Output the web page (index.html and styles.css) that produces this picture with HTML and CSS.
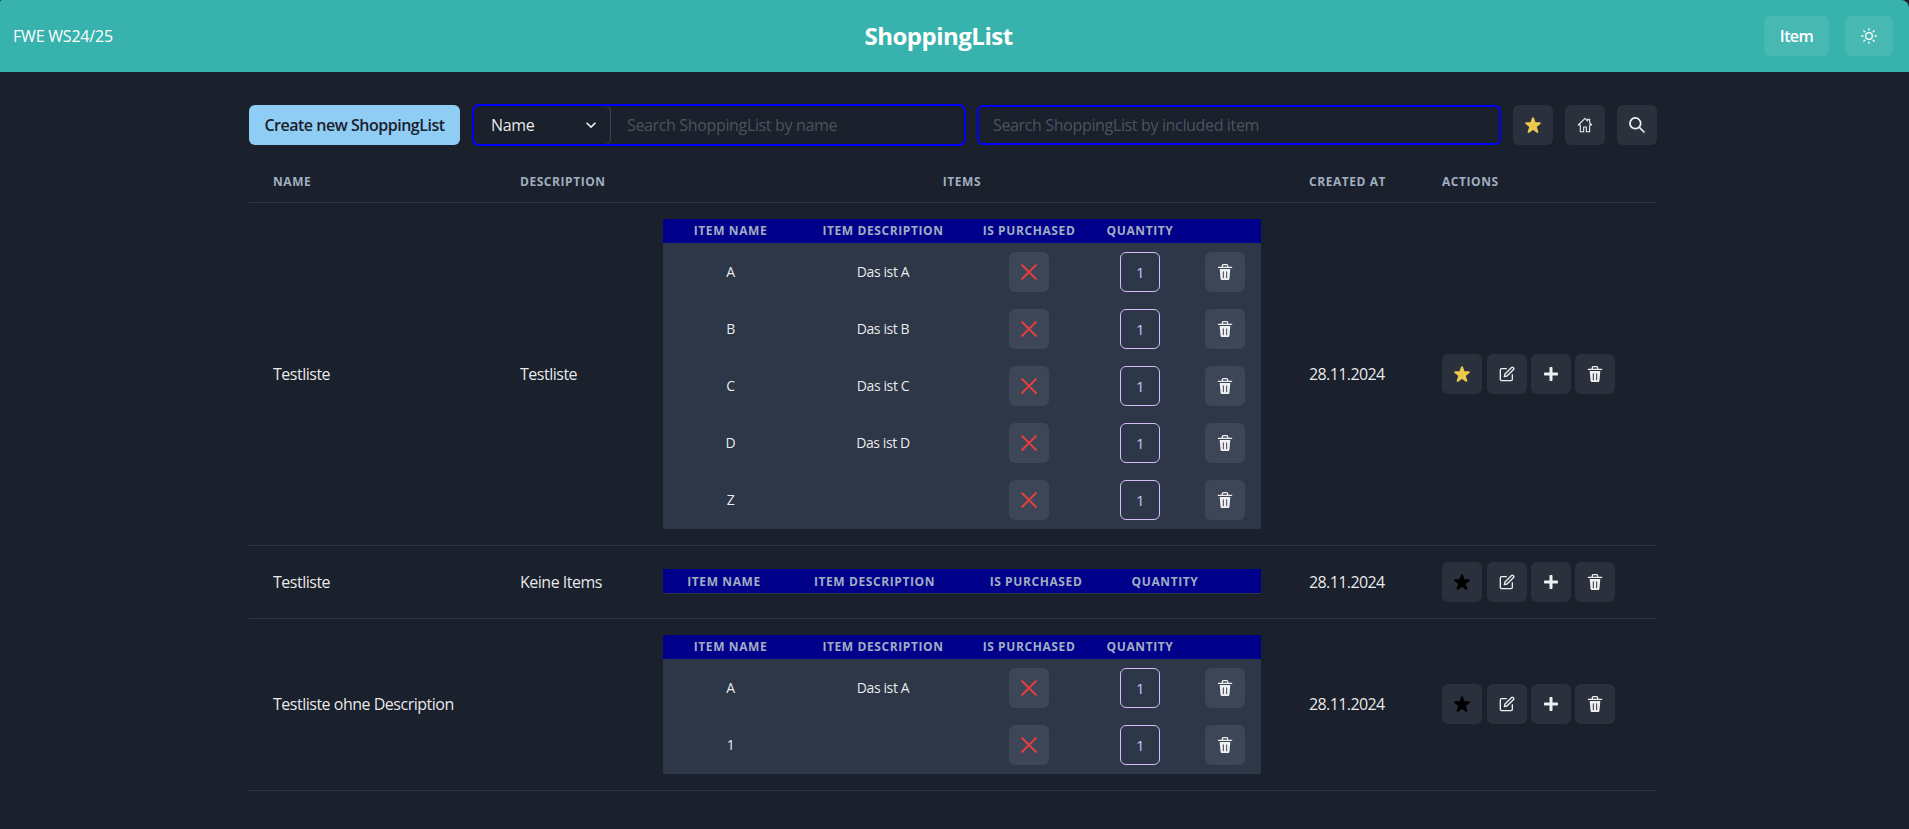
FILE: index.html
```html
<!DOCTYPE html>
<html lang="en">
<head>
<meta charset="utf-8">
<title>ShoppingList</title>
<link rel="stylesheet" href="styles.css">
</head>
<body>
<svg class="defs" width="0" height="0" aria-hidden="true">
  <defs>
    <symbol id="i-star" viewBox="0 0 24 24"><path fill="currentColor" d="M23.555,8.729a1.505,1.505,0,0,0-1.406-.98H16.062a.5.5,0,0,1-.472-.334L13.405,1.222a1.5,1.5,0,0,0-2.81,0l-.005.016L8.41,7.415a.5.5,0,0,1-.471.334H1.85A1.5,1.5,0,0,0,.887,10.4l5.184,4.3a.5.5,0,0,1,.155.543L4.048,21.774a1.5,1.5,0,0,0,2.31,1.684l5.346-3.92a.5.5,0,0,1,.591,0l5.344,3.919a1.5,1.5,0,0,0,2.312-1.683l-2.178-6.535a.5.5,0,0,1,.155-.543l5.194-4.306A1.5,1.5,0,0,0,23.555,8.729Z"/></symbol>
    <symbol id="i-edit" viewBox="0 0 24 24"><g fill="none" stroke="currentColor" stroke-width="2" stroke-linecap="round" stroke-linejoin="round"><path d="M11 4H4a2 2 0 0 0-2 2v14a2 2 0 0 0 2 2h14a2 2 0 0 0 2-2v-7"/><path d="M18.5 2.5a2.121 2.121 0 0 1 3 3L12 15l-4 1 1-4 9.5-9.5z"/></g></symbol>
    <symbol id="i-add" viewBox="0 0 448 512"><path fill="currentColor" d="M416 208H272V64c0-17.67-14.33-32-32-32h-32c-17.67 0-32 14.33-32 32v144H32c-17.67 0-32 14.33-32 32v32c0 17.67 14.33 32 32 32h144v144c0 17.67 14.33 32 32 32h32c17.67 0 32-14.33 32-32V304h144c17.67 0 32-14.33 32-32v-32c0-17.67-14.33-32-32-32z"/></symbol>
    <symbol id="i-del" viewBox="0 0 24 24"><path fill="currentColor" d="M19.452 7.5H4.547a.5.5 0 00-.5.545l1.287 14.136A2 2 0 007.326 24h9.347a2 2 0 001.992-1.819L19.95 8.045a.5.5 0 00-.129-.382.5.5 0 00-.369-.163zm-9.2 13a.75.75 0 01-1.5 0v-9a.75.75 0 011.5 0zm5 0a.75.75 0 01-1.5 0v-9a.75.75 0 011.5 0zM22 4h-4.75a.25.25 0 01-.25-.25V2.5A2.5 2.5 0 0014.5 0h-5A2.5 2.5 0 007 2.5v1.25a.25.25 0 01-.25.25H2a1 1 0 000 2h20a1 1 0 000-2zM9 3.75V2.5a.5.5 0 01.5-.5h5a.5.5 0 01.5.5v1.25a.25.25 0 01-.25.25h-5.5A.25.25 0 019 3.75z"/></symbol>
    <symbol id="i-search" viewBox="0 0 24 24"><path fill="currentColor" d="M23.384,21.619,16.855,15.09a9.284,9.284,0,1,0-1.768,1.768l6.529,6.529a1.266,1.266,0,0,0,1.768,0A1.251,1.251,0,0,0,23.384,21.619ZM2.75,9.5a6.75,6.75,0,1,1,6.75,6.75A6.758,6.758,0,0,1,2.75,9.5Z"/></symbol>
    <symbol id="i-sun" viewBox="0 0 24 24"><g fill="none" stroke="currentColor" stroke-width="2" stroke-linecap="round" stroke-linejoin="round"><circle cx="12" cy="12" r="5"/><path d="M12 1v2M12 21v2M4.22 4.22l1.42 1.42M18.36 18.36l1.42 1.42M1 12h2M21 12h2M4.22 19.78l1.42-1.42M18.36 5.64l1.42-1.42"/></g></symbol>
    <symbol id="i-home" viewBox="0 0 24 24"><path fill="none" stroke="currentColor" stroke-width="1.6" stroke-linejoin="round" stroke-linecap="round" d="M2 12 12 2l4 4V3.5h3V9l3 3h-3v10h-5v-7h-4v7H5V12H2z"/></symbol>
    <symbol id="i-x" viewBox="0 0 24 24"><path fill="none" stroke="currentColor" stroke-width="2.5" d="M2 2l20 20M22 2 2 22"/></symbol>
    <symbol id="i-chev" viewBox="0 0 24 24"><path fill="currentColor" d="M16.59 8.59 12 13.17 7.41 8.59 6 10l6 6 6-6z"/></symbol>
  </defs>
</svg>

<header class="topbar">
  <div class="brand">FWE WS24/25</div>
  <h1 class="title">ShoppingList</h1>
  <nav class="topnav">
    <button class="topbtn">Item</button>
    <button class="topbtn topbtn-icon"><svg class="ic16"><use href="#i-sun"/></svg></button>
  </nav>
</header>

<main class="page">
  <div class="toolbar">
    <button class="create">Create new ShoppingList</button>
    <div class="group">
      <div class="select"><span>Name</span><svg class="chev"><use href="#i-chev"/></svg></div>
      <input class="group-input" placeholder="Search ShoppingList by name">
    </div>
    <input class="search-input" placeholder="Search ShoppingList by included item">
    <button class="ibtn star-y"><svg class="ic16"><use href="#i-star"/></svg></button>
    <button class="ibtn"><svg class="ic16"><use href="#i-home"/></svg></button>
    <button class="ibtn"><svg class="ic16"><use href="#i-search"/></svg></button>
  </div>

  <table class="lists">
    <colgroup><col class="c-name"><col class="c-desc"><col class="c-items"><col class="c-date"><col class="c-act"></colgroup>
    <thead>
      <tr><th>Name</th><th>Description</th><th class="center">Items</th><th>Created at</th><th>Actions</th></tr>
    </thead>
    <tbody>
      <tr>
        <td>Testliste</td>
        <td>Testliste</td>
        <td>
          <table class="items">
            <colgroup><col class="i-name"><col class="i-desc"><col class="i-pur"><col class="i-qty"><col class="i-del"></colgroup>
            <thead><tr><th>Item Name</th><th>Item Description</th><th>Is Purchased</th><th>Quantity</th><th></th></tr></thead>
            <tbody>
              <tr><td>A</td><td>Das ist A</td><td><button class="ibtn x"><svg class="ic18"><use href="#i-x"/></svg></button></td><td><div class="qty">1</div></td><td class="del-cell"><button class="ibtn"><svg class="ic16"><use href="#i-del"/></svg></button></td></tr>
              <tr><td>B</td><td>Das ist B</td><td><button class="ibtn x"><svg class="ic18"><use href="#i-x"/></svg></button></td><td><div class="qty">1</div></td><td class="del-cell"><button class="ibtn"><svg class="ic16"><use href="#i-del"/></svg></button></td></tr>
              <tr><td>C</td><td>Das ist C</td><td><button class="ibtn x"><svg class="ic18"><use href="#i-x"/></svg></button></td><td><div class="qty">1</div></td><td class="del-cell"><button class="ibtn"><svg class="ic16"><use href="#i-del"/></svg></button></td></tr>
              <tr><td>D</td><td>Das ist D</td><td><button class="ibtn x"><svg class="ic18"><use href="#i-x"/></svg></button></td><td><div class="qty">1</div></td><td class="del-cell"><button class="ibtn"><svg class="ic16"><use href="#i-del"/></svg></button></td></tr>
              <tr><td>Z</td><td></td><td><button class="ibtn x"><svg class="ic18"><use href="#i-x"/></svg></button></td><td><div class="qty">1</div></td><td class="del-cell"><button class="ibtn"><svg class="ic16"><use href="#i-del"/></svg></button></td></tr>
            </tbody>
          </table>
        </td>
        <td class="date">28.11.2024</td>
        <td><div class="actions">
          <button class="ibtn star-y"><svg class="ic16"><use href="#i-star"/></svg></button>
          <button class="ibtn"><svg class="ic16"><use href="#i-edit"/></svg></button>
          <button class="ibtn"><svg class="ic16"><use href="#i-add"/></svg></button>
          <button class="ibtn"><svg class="ic16"><use href="#i-del"/></svg></button>
        </div></td>
      </tr>
      <tr>
        <td>Testliste</td>
        <td>Keine Items</td>
        <td>
          <table class="items items-empty">
            <colgroup><col class="e-name"><col class="e-desc"><col class="e-pur"><col class="e-qty"><col class="e-del"></colgroup>
            <thead><tr><th>Item Name</th><th>Item Description</th><th>Is Purchased</th><th>Quantity</th><th></th></tr></thead>
          </table>
        </td>
        <td class="date">28.11.2024</td>
        <td><div class="actions">
          <button class="ibtn star-k"><svg class="ic16"><use href="#i-star"/></svg></button>
          <button class="ibtn"><svg class="ic16"><use href="#i-edit"/></svg></button>
          <button class="ibtn"><svg class="ic16"><use href="#i-add"/></svg></button>
          <button class="ibtn"><svg class="ic16"><use href="#i-del"/></svg></button>
        </div></td>
      </tr>
      <tr>
        <td>Testliste ohne Description</td>
        <td></td>
        <td>
          <table class="items">
            <colgroup><col class="i-name"><col class="i-desc"><col class="i-pur"><col class="i-qty"><col class="i-del"></colgroup>
            <thead><tr><th>Item Name</th><th>Item Description</th><th>Is Purchased</th><th>Quantity</th><th></th></tr></thead>
            <tbody>
              <tr><td>A</td><td>Das ist A</td><td><button class="ibtn x"><svg class="ic18"><use href="#i-x"/></svg></button></td><td><div class="qty">1</div></td><td class="del-cell"><button class="ibtn"><svg class="ic16"><use href="#i-del"/></svg></button></td></tr>
              <tr><td>1</td><td></td><td><button class="ibtn x"><svg class="ic18"><use href="#i-x"/></svg></button></td><td><div class="qty">1</div></td><td class="del-cell"><button class="ibtn"><svg class="ic16"><use href="#i-del"/></svg></button></td></tr>
            </tbody>
          </table>
        </td>
        <td class="date">28.11.2024</td>
        <td><div class="actions">
          <button class="ibtn star-k"><svg class="ic16"><use href="#i-star"/></svg></button>
          <button class="ibtn"><svg class="ic16"><use href="#i-edit"/></svg></button>
          <button class="ibtn"><svg class="ic16"><use href="#i-add"/></svg></button>
          <button class="ibtn"><svg class="ic16"><use href="#i-del"/></svg></button>
        </div></td>
      </tr>
    </tbody>
  </table>
</main>
</body>
</html>
```
FILE: styles.css
```css
* { box-sizing: border-box; }
html, body { margin: 0; height: 100%; overflow: hidden; }
body {
  background: #1a202c;
  color: rgba(255, 255, 255, 0.92);
  font-family: "Open Sans", "Noto Sans", sans-serif;
  font-size: 14px;
}
.defs { position: absolute; }
button, input { font: inherit; color: inherit; }
button { border: 0; cursor: pointer; padding: 0; }

.topbar {
  height: 72px;
  background: #38b2ac;
  border-radius: 2px 8px 0 0;
  display: flex;
  justify-content: space-between;
  align-items: center;
  padding: 0 16px 0 13px;
  color: #fff;
}
.brand { font-size: 16px; width: 100px; white-space: nowrap; letter-spacing: -0.2px; }
.title { margin: 0; font-size: 24px; line-height: 1; font-weight: 700; letter-spacing: -0.5px; }
.topnav { display: flex; gap: 16px; }
.topbtn {
  height: 40px;
  width: 65px;
  border-radius: 6px;
  background: rgba(255, 255, 255, 0.08);
  color: #fff;
  font-size: 16px;
  font-weight: 600;
  letter-spacing: -0.6px;
  display: flex;
  align-items: center;
  justify-content: center;
}
.topbtn-icon { width: 48px; }

.page { width: 1408px; margin: 0 0 0 249px; padding-top: 33px; }
.toolbar { display: flex; align-items: center; gap: 12px; margin-bottom: 16px; }
.create {
  width: 211px;
  height: 40px;
  margin-right: 1px;
  border-radius: 6px;
  background: #90cdf4;
  color: #1a202c;
  font-size: 16px;
  font-weight: 600;
  letter-spacing: -0.48px;
  flex: none;
}
.group {
  width: 492px;
  height: 40px;
  flex: none;
  display: flex;
  align-items: stretch;
  outline: 2px solid #0000ff;
  outline-offset: -1px;
  border-radius: 6px;
}
.select {
  width: 138px;
  flex: none;
  border: 1px solid rgba(255, 255, 255, 0.16);
  border-radius: 6px;
  padding: 0 9px 0 17px;
  display: flex;
  align-items: center;
  justify-content: space-between;
  font-size: 16px;
  letter-spacing: -0.3px;
}
.chev { width: 20px; height: 20px; }
.group-input, .search-input {
  background: transparent;
  font-size: 16px;
  letter-spacing: -0.35px;
  outline: 0;
}
.group-input { flex: 1; min-width: 0; border: 0; padding: 0 16px; }
.search-input {
  width: 524px;
  flex: none;
  height: 40px;
  border: 2px solid #0000ff;
  border-radius: 6px;
  padding: 0 14px;
}
::placeholder { color: rgba(255, 255, 255, 0.24); opacity: 1; }

.ibtn {
  width: 40px;
  height: 40px;
  flex: none;
  border-radius: 6px;
  background: rgba(255, 255, 255, 0.08);
  color: rgba(255, 255, 255, 0.92);
  display: inline-flex;
  align-items: center;
  justify-content: center;
  vertical-align: middle;
}
.ic16 { width: 16px; height: 16px; display: block; }
.ic18 { width: 18px; height: 18px; display: block; }
.star-y { color: #ecc94b; }
.star-k { color: #000; }
.x { color: #e53e3e; }

.lists { width: 1408px; table-layout: fixed; border-collapse: collapse; }
.c-name { width: 247px; }
.c-desc { width: 143px; }
.c-items { width: 646px; }
.c-date { width: 133px; }
.c-act { width: 239px; }
.lists > thead > tr > th {
  height: 41px;
  padding: 2px 24px 0;
  text-align: left;
  font-size: 12px;
  font-weight: 700;
  line-height: 16px;
  text-transform: uppercase;
  letter-spacing: 0.55px;
  color: #a0aec0;
  border-bottom: 1px solid #2d3748;
}
.lists > thead > tr > th.center { text-align: center; }
.lists > tbody > tr > td {
  padding: 16px 24px;
  font-size: 16px;
  letter-spacing: -0.49px;
  line-height: 20px;
  border-bottom: 1px solid #2d3748;
}
.lists > tbody > tr > td.date { letter-spacing: -0.6px; }
.actions { display: flex; gap: 4px; }
.actions .ibtn:first-child { margin-right: 1px; }

.items {
  width: 598px;
  table-layout: fixed;
  border-collapse: separate;
  border-spacing: 0;
  background: #2d3748;
  border-bottom: 1px solid #2d3748;
}
.i-name { width: 135px; }
.i-desc { width: 170px; }
.i-pur { width: 122px; }
.i-qty { width: 100px; }
.i-del { width: 71px; }
.e-name { width: 122px; }
.e-desc { width: 179px; }
.e-pur { width: 144px; }
.e-qty { width: 114px; }
.e-del { width: 39px; }
.lists .items th {
  height: 24px;
  padding: 1px 0 0;
  background: #00008b;
  color: #a0aec0;
  font-size: 12px;
  font-weight: 700;
  line-height: 16px;
  text-align: center;
  text-transform: uppercase;
  letter-spacing: 0.6px;
}
.lists .items td {
  height: 57px;
  padding: 1px 0 0;
  text-align: center;
  font-size: 14px;
  letter-spacing: -0.4px;
  line-height: 20px;
}
.lists .items td.del-cell { padding-right: 1px; }
.qty {
  width: 40px;
  height: 40px;
  margin: 0 auto;
  border: 1px solid #d6bcfa;
  border-radius: 6px;
  display: flex;
  align-items: center;
  justify-content: center;
  color: #c4c8f6;
  font-size: 15px;
  font-weight: 500;
}
```
